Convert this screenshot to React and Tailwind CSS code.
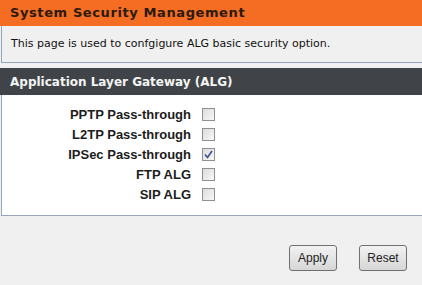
const rows = [
  { label: "PPTP Pass-through", checked: false },
  { label: "L2TP Pass-through", checked: false },
  { label: "IPSec Pass-through", checked: true },
  { label: "FTP ALG", checked: false },
  { label: "SIP ALG", checked: false },
];

const Box = ({ checked }) => (
  <span className="flex h-[13px] w-[13px] items-center justify-center border border-[#8e8f8f] bg-gradient-to-br from-[#dcdcdc] to-[#f8f8f8]">
    {checked && (
      <svg width="9" height="9" viewBox="0 0 9 9">
        <path d="M1 4.5 L3.5 7.5 L8 1" fill="none" stroke="#3d4f8c" strokeWidth="1.6" />
      </svg>
    )}
  </span>
);

const Button = ({ children }) => (
  <button className="h-[26px] w-[48px] rounded-[3px] border border-[#707070] bg-gradient-to-b from-[#f2f2f2] to-[#d6d6d6] text-[12px] text-[#222]">
    {children}
  </button>
);

export default function App() {
  return (
    <div className="h-[285px] w-[422px] overflow-hidden bg-[#f0f0f0] font-['DejaVu_Sans',sans-serif]">
      <div className="flex h-[26px] items-center bg-[#f46d22] pl-[10px] text-[13px] font-bold tracking-[0.6px] text-[#2a1a10]">
        System Security Management
      </div>
      <div className="ml-[1px] flex h-[37px] items-center border-b border-l border-[#97a5ba] bg-[#f0f0f0] pl-[9px] text-[11px] text-[#111]">
        This page is used to confgigure ALG basic security option.
      </div>
      <div className="mt-[5px] flex h-[27px] items-center bg-[#404448] pl-[10px] text-[12px] font-bold text-[#f4f4f4]">
        Application Layer Gateway (ALG)
      </div>
      <div className="ml-[1px] flex h-[121px] flex-col gap-[7px] border-b border-l border-[#97a5ba] bg-white pt-[13px] font-['Liberation_Sans',sans-serif]">
        {rows.map((r) => (
          <div key={r.label} className="flex h-[13px] items-center">
            <span className="w-[189px] text-right text-[13px] font-bold text-[#1c1c1c]">{r.label}</span>
            <span className="ml-[11px]">
              <Box checked={r.checked} />
            </span>
          </div>
        ))}
      </div>
      <div className="mt-[29px] flex gap-[22px] pl-[289px] font-['Liberation_Sans',sans-serif]">
        <Button>Apply</Button>
        <Button>Reset</Button>
      </div>
    </div>
  );
}
